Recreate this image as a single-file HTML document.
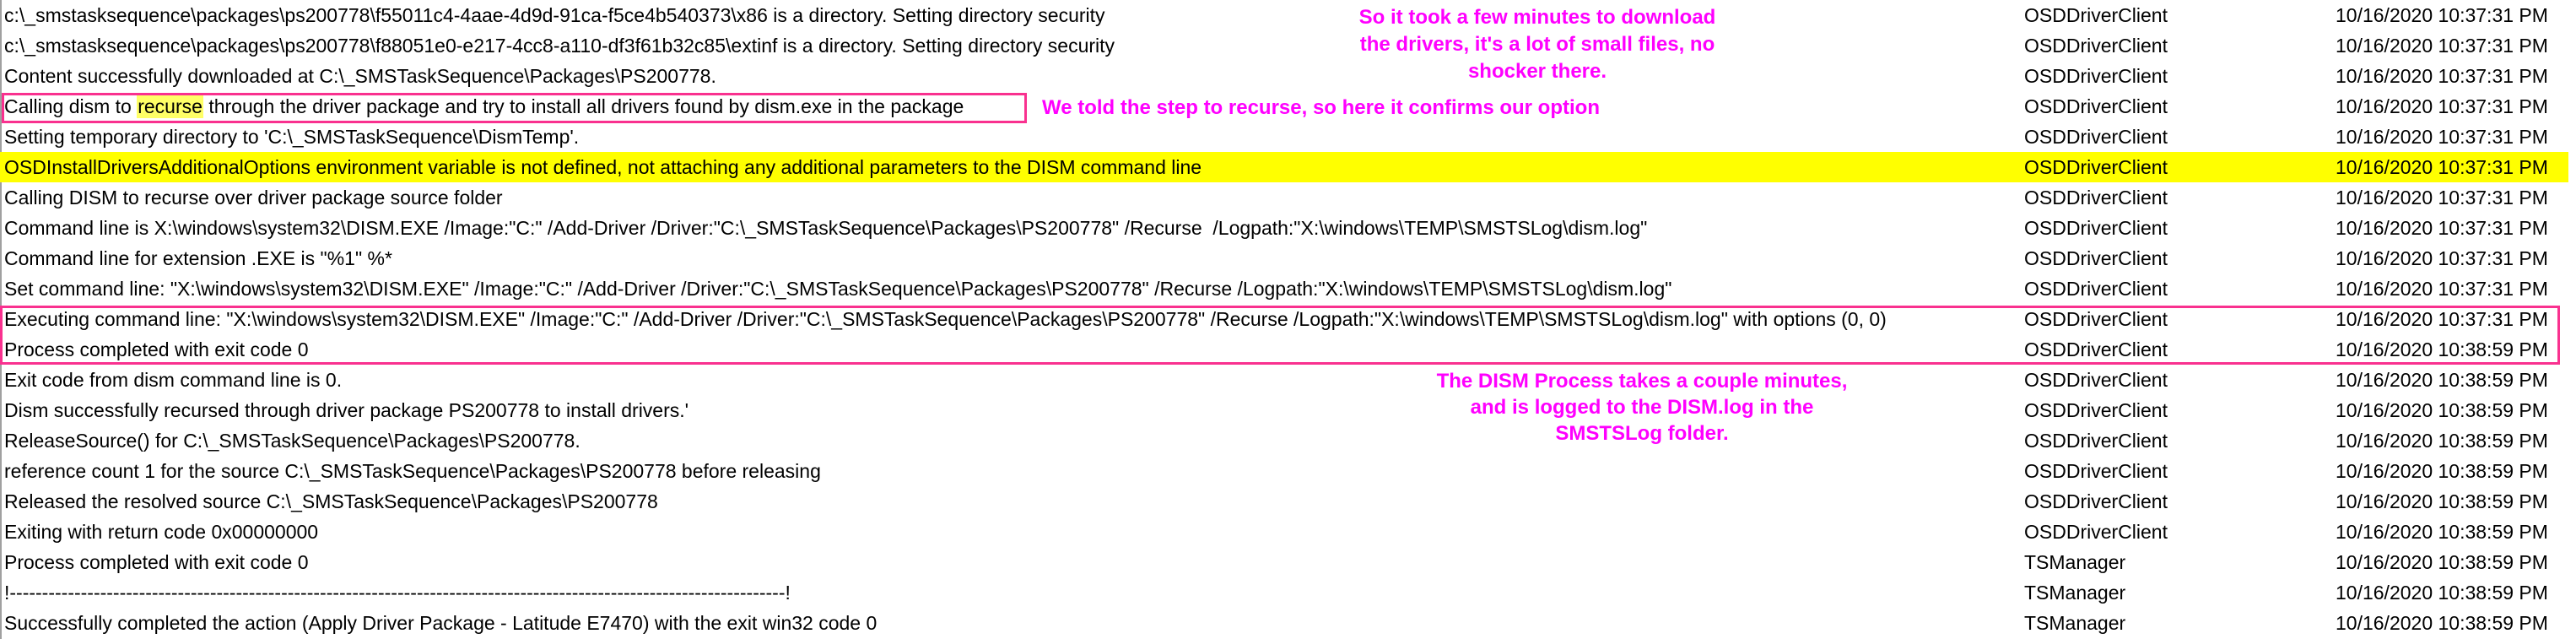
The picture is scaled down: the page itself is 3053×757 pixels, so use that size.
<!DOCTYPE html>
<html><head><meta charset="utf-8"><style>
html,body{margin:0;padding:0;background:#fff;width:3053px;height:757px;overflow:hidden;position:relative}
.r{position:absolute;left:0;height:36px;line-height:36px;font-family:"Liberation Sans",sans-serif;font-size:23px;color:#000;white-space:nowrap;width:3053px}
.r > span{position:absolute;top:0}
.m{left:5px}.c{left:2399px}.d{left:2768px}
.y{background:#ffff00;width:3044px}
.hl{background:#ffff66;display:inline-block;line-height:27px;padding:0 1px}
.a{position:absolute;font-family:"Liberation Sans",sans-serif;font-weight:bold;font-size:24px;color:#ff00ff;white-space:nowrap;text-align:center}
.box{position:absolute;border:3px solid #f9318f;box-sizing:border-box}
</style></head><body>
<div style="position:absolute;left:0;top:0;width:2px;height:757px;background:#a0a0a0"></div>

<div class="r" style="top:0"><span class="m">c:\_smstasksequence\packages\ps200778\f55011c4-4aae-4d9d-91ca-f5ce4b540373\x86 is a directory. Setting directory security</span><span class="c">OSDDriverClient</span><span class="d">10/16/2020 10:37:31 PM</span></div>
<div class="r" style="top:36px"><span class="m">c:\_smstasksequence\packages\ps200778\f88051e0-e217-4cc8-a110-df3f61b32c85\extinf is a directory. Setting directory security</span><span class="c">OSDDriverClient</span><span class="d">10/16/2020 10:37:31 PM</span></div>
<div class="r" style="top:72px"><span class="m">Content successfully downloaded at C:\_SMSTaskSequence\Packages\PS200778.</span><span class="c">OSDDriverClient</span><span class="d">10/16/2020 10:37:31 PM</span></div>
<div class="r" style="top:108px"><span class="m">Calling dism to <span class="hl">recurse</span> through the driver package and try to install all drivers found by dism.exe in the package</span><span class="c">OSDDriverClient</span><span class="d">10/16/2020 10:37:31 PM</span></div>
<div class="r" style="top:144px"><span class="m">Setting temporary directory to 'C:\_SMSTaskSequence\DismTemp'.</span><span class="c">OSDDriverClient</span><span class="d">10/16/2020 10:37:31 PM</span></div>
<div class="r y" style="top:180px"><span class="m">OSDInstallDriversAdditionalOptions environment variable is not defined, not attaching any additional parameters to the DISM command line</span><span class="c">OSDDriverClient</span><span class="d">10/16/2020 10:37:31 PM</span></div>
<div class="r" style="top:216px"><span class="m">Calling DISM to recurse over driver package source folder</span><span class="c">OSDDriverClient</span><span class="d">10/16/2020 10:37:31 PM</span></div>
<div class="r" style="top:252px"><span class="m">Command line is X:\windows\system32\DISM.EXE /Image:"C:" /Add-Driver /Driver:"C:\_SMSTaskSequence\Packages\PS200778" /Recurse &nbsp;/Logpath:"X:\windows\TEMP\SMSTSLog\dism.log"</span><span class="c">OSDDriverClient</span><span class="d">10/16/2020 10:37:31 PM</span></div>
<div class="r" style="top:288px"><span class="m">Command line for extension .EXE is "%1" %*</span><span class="c">OSDDriverClient</span><span class="d">10/16/2020 10:37:31 PM</span></div>
<div class="r" style="top:324px"><span class="m">Set command line: "X:\windows\system32\DISM.EXE" /Image:"C:" /Add-Driver /Driver:"C:\_SMSTaskSequence\Packages\PS200778" /Recurse /Logpath:"X:\windows\TEMP\SMSTSLog\dism.log"</span><span class="c">OSDDriverClient</span><span class="d">10/16/2020 10:37:31 PM</span></div>
<div class="r" style="top:360px"><span class="m">Executing command line: "X:\windows\system32\DISM.EXE" /Image:"C:" /Add-Driver /Driver:"C:\_SMSTaskSequence\Packages\PS200778" /Recurse /Logpath:"X:\windows\TEMP\SMSTSLog\dism.log" with options (0, 0)</span><span class="c">OSDDriverClient</span><span class="d">10/16/2020 10:37:31 PM</span></div>
<div class="r" style="top:396px"><span class="m">Process completed with exit code 0</span><span class="c">OSDDriverClient</span><span class="d">10/16/2020 10:38:59 PM</span></div>
<div class="r" style="top:432px"><span class="m">Exit code from dism command line is 0.</span><span class="c">OSDDriverClient</span><span class="d">10/16/2020 10:38:59 PM</span></div>
<div class="r" style="top:468px"><span class="m">Dism successfully recursed through driver package PS200778 to install drivers.'</span><span class="c">OSDDriverClient</span><span class="d">10/16/2020 10:38:59 PM</span></div>
<div class="r" style="top:504px"><span class="m">ReleaseSource() for C:\_SMSTaskSequence\Packages\PS200778.</span><span class="c">OSDDriverClient</span><span class="d">10/16/2020 10:38:59 PM</span></div>
<div class="r" style="top:540px"><span class="m">reference count 1 for the source C:\_SMSTaskSequence\Packages\PS200778 before releasing</span><span class="c">OSDDriverClient</span><span class="d">10/16/2020 10:38:59 PM</span></div>
<div class="r" style="top:576px"><span class="m">Released the resolved source C:\_SMSTaskSequence\Packages\PS200778</span><span class="c">OSDDriverClient</span><span class="d">10/16/2020 10:38:59 PM</span></div>
<div class="r" style="top:612px"><span class="m">Exiting with return code 0x00000000</span><span class="c">OSDDriverClient</span><span class="d">10/16/2020 10:38:59 PM</span></div>
<div class="r" style="top:648px"><span class="m">Process completed with exit code 0</span><span class="c">TSManager</span><span class="d">10/16/2020 10:38:59 PM</span></div>
<div class="r" style="top:684px"><span class="m">!------------------------------------------------------------------------------------------------------------------------!</span><span class="c">TSManager</span><span class="d">10/16/2020 10:38:59 PM</span></div>
<div class="r" style="top:720px"><span class="m">Successfully completed the action (Apply Driver Package - Latitude E7470) with the exit win32 code 0</span><span class="c">TSManager</span><span class="d">10/16/2020 10:38:59 PM</span></div>

<div class="box" style="left:2px;top:110px;width:1215px;height:36px"></div>
<div class="box" style="left:0;top:362px;width:3034px;height:70px"></div>

<div class="a" style="left:1572px;top:5px;width:500px;line-height:32px">So it took a few minutes to download<br>the drivers, it's a lot of small files, no<br>shocker there.</div>
<div class="a" style="left:1235px;top:112px;line-height:32px;text-align:left">We told the step to recurse, so here it confirms our option</div>
<div class="a" style="left:1646px;top:436px;width:600px;line-height:31px">The DISM Process takes a couple minutes,<br>and is logged to the DISM.log in the<br>SMSTSLog folder.</div>
</body></html>
